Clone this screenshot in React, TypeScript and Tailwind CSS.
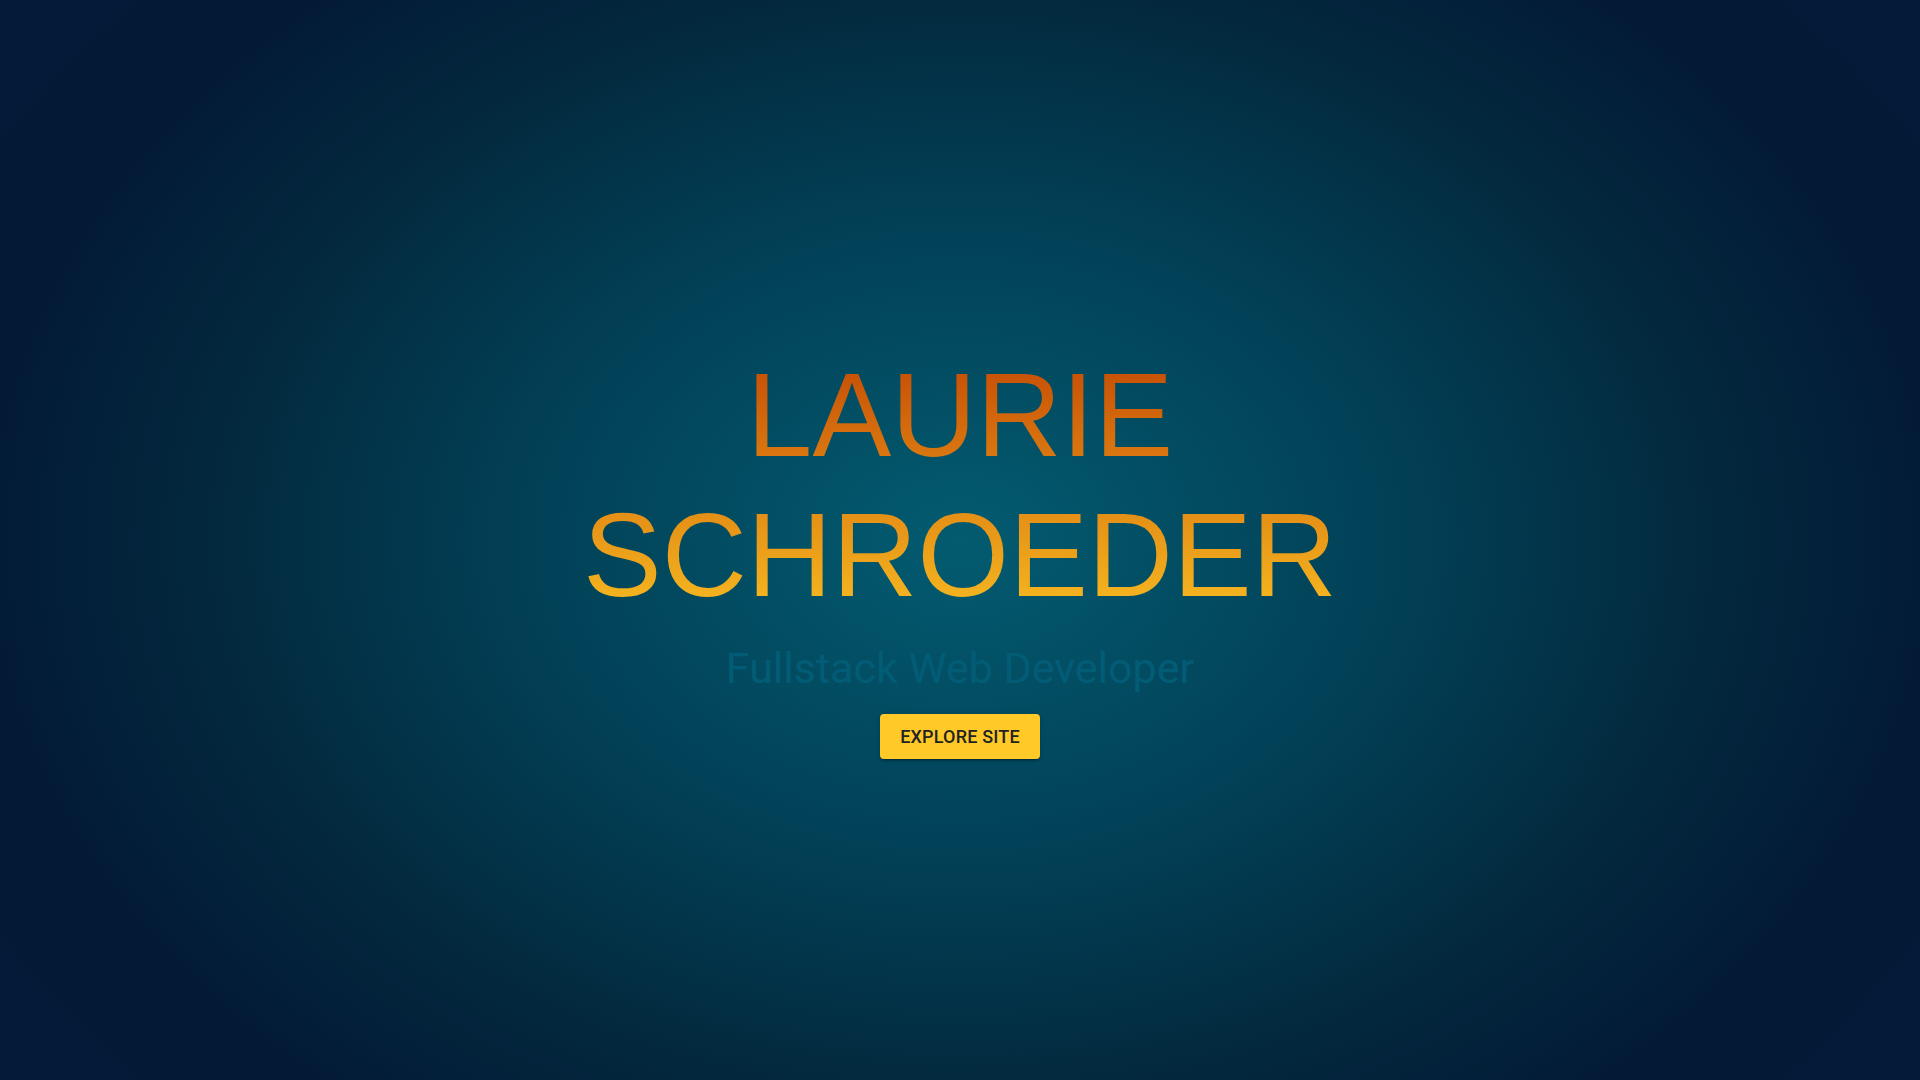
import React from "react";

const Hero: React.FC = () => {
  return (
    <div className="w-full h-screen overflow-hidden flex flex-col items-center justify-center pt-[24px] bg-[radial-gradient(ellipse_1300px_960px_at_50%_50%,#035b70_0%,#024359_30%,#023c52_38%,#032a3f_56%,#031a36_75%,#041a3a_100%)]">
      <h1 className="text-center text-[118px] leading-[140px] font-normal font-['Liberation_Sans',Arial,sans-serif] bg-gradient-to-b from-[#c24504] to-[#f8be22] bg-clip-text text-transparent">
        LAURIE
        <br />
        SCHROEDER
      </h1>
      <h2 className="mt-[11px] text-[43px] font-normal text-[#035c76] font-['Roboto',sans-serif]">
        Fullstack Web Developer
      </h2>
      <button className="mt-[14px] h-[45px] px-5 rounded-[4px] bg-[#ffca28] text-[#222] text-[18px] font-medium tracking-[0.01em] font-['Roboto',sans-serif] shadow-[0px_3px_1px_-2px_rgba(0,0,0,0.2),0px_2px_2px_0px_rgba(0,0,0,0.14),0px_1px_5px_0px_rgba(0,0,0,0.12)]">
        EXPLORE SITE
      </button>
    </div>
  );
};

export default function App() {
  return <Hero />;
}
